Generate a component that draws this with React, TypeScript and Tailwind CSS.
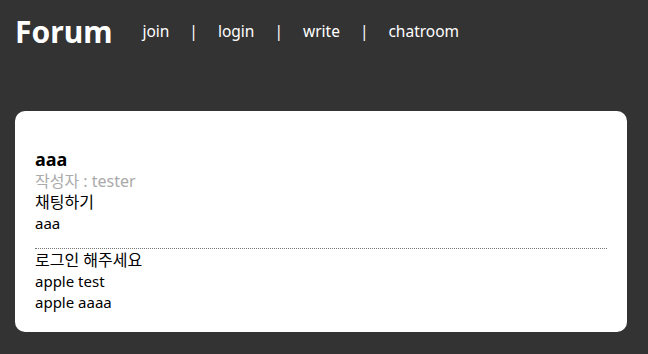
export default function App() {
  const font = { fontFamily: '"Noto Sans", "Noto Sans CJK KR", sans-serif' };
  return (
    <div className="min-h-screen bg-[#333333] text-white" style={font}>
      {/* Nav */}
      <div className="flex items-center px-[15px] pt-[10px]">
        <h1 className="text-[30px] font-bold leading-[44px] mr-[30px]">Forum</h1>
        <div className="flex items-center gap-[20px] text-[15.5px]">
          <a>join</a>
          <span>|</span>
          <a>login</a>
          <span>|</span>
          <a>write</a>
          <span>|</span>
          <a>chatroom</a>
        </div>
      </div>

      {/* Detail card */}
      <div className="ml-[15px] mr-[21px] mt-[57px] rounded-[10px] bg-white px-[20px] pt-[36px] pb-[19px] text-black">
        <h4 className="text-[18px] font-bold leading-[24px]">aaa</h4>
        <p className="text-[16px] leading-[21px] text-[#aaaaaa]">작성자 : tester</p>
        <p className="text-[16px] leading-[21px]">채팅하기</p>
        <p className="text-[15px] leading-[21px]">aaa</p>
        <div className="mt-[14px] border-t border-dotted border-[#777777]" />
        <p className="text-[16px] leading-[21px] mt-[1px]">로그인 해주세요</p>
        <p className="text-[15px] leading-[21px]">apple test</p>
        <p className="text-[15px] leading-[21px]">apple aaaa</p>
      </div>
    </div>
  );
}
